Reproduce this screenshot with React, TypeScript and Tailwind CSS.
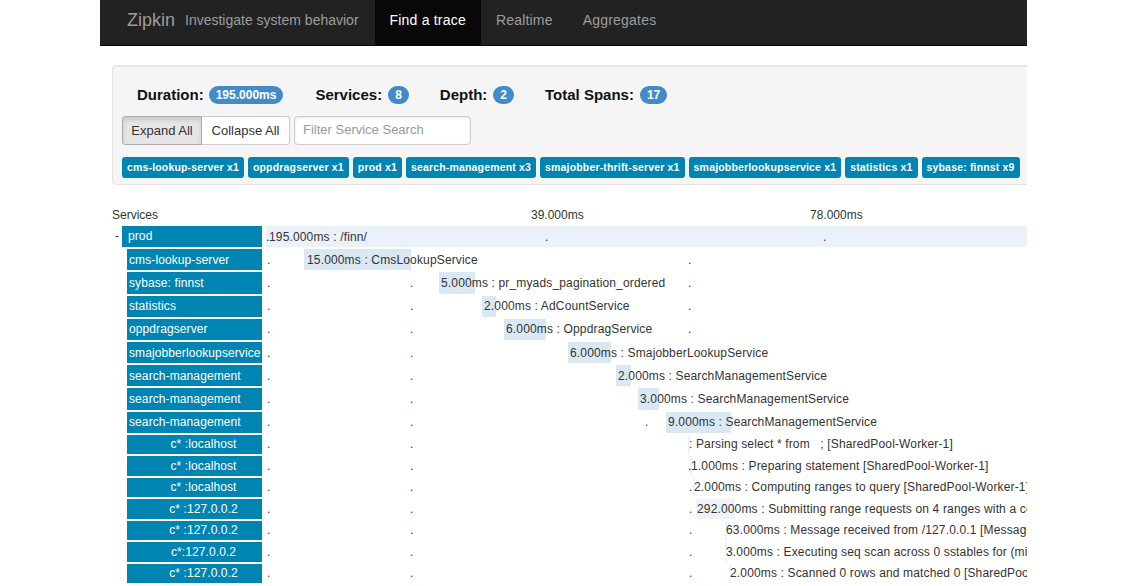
import React from "react";

const TL = 266; // page x where the timeline starts

type Span = {
    name: string;
    root?: boolean;
    host?: boolean;
    bar: [number, number];
    faint?: boolean;
    textX: number;
    text: string;
    dots: number[];
};

const tags = [
    "cms-lookup-server x1",
    "oppdragserver x1",
    "prod x1",
    "search-management x3",
    "smajobber-thrift-server x1",
    "smajobberlookupservice x1",
    "statistics x1",
    "sybase: finnst x9",
];

const spans: Span[] = [
    { name: "prod", root: true, bar: [266, 1100], textX: 269, text: "195.000ms : /finn/", dots: [267, 546, 824] },
    { name: "cms-lookup-server", bar: [304, 411], textX: 307, text: "15.000ms : CmsLookupService", dots: [268, 689] },
    { name: "sybase: finnst", bar: [439, 475], textX: 441, text: "5.000ms : pr_myads_pagination_ordered", dots: [268, 411, 689] },
    { name: "statistics", bar: [482, 496], textX: 484, text: "2.000ms : AdCountService", dots: [268, 411, 689] },
    { name: "oppdragserver", bar: [504, 546], textX: 506, text: "6.000ms : OppdragService", dots: [268, 411, 689] },
    { name: "smajobberlookupservice", bar: [568, 611], textX: 570, text: "6.000ms : SmajobberLookupService", dots: [268, 411] },
    { name: "search-management", bar: [616, 631], textX: 618, text: "2.000ms : SearchManagementService", dots: [268, 411] },
    { name: "search-management", bar: [638, 659], textX: 640, text: "3.000ms : SearchManagementService", dots: [268, 411] },
    { name: "search-management", bar: [666, 731], textX: 668, text: "9.000ms : SearchManagementService", dots: [268, 411, 646] },
    { name: "c* :localhost", host: true, bar: [688, 690], faint: true, textX: 689, text: ": Parsing select * from   ; [SharedPool-Worker-1]", dots: [268, 411] },
    { name: "c* :localhost", host: true, bar: [690, 692], faint: true, textX: 691, text: "1.000ms : Preparing statement [SharedPool-Worker-1]", dots: [268, 411, 689] },
    { name: "c* :localhost", host: true, bar: [693, 695], faint: true, textX: 694, text: "2.000ms : Computing ranges to query [SharedPool-Worker-1]", dots: [268, 411, 690] },
    { name: "c* :127.0.0.2", host: true, bar: [696, 735], faint: true, textX: 697, text: "292.000ms : Submitting range requests on 4 ranges with a concurrency of 1", dots: [268, 411, 690] },
    { name: "c* :127.0.0.2", host: true, bar: [725, 727], faint: true, textX: 726, text: "63.000ms : Message received from /127.0.0.1 [MessagingService-Incoming]", dots: [268, 411, 690] },
    { name: "c*:127.0.0.2", host: true, bar: [725, 727], faint: true, textX: 726, text: "3.000ms : Executing seq scan across 0 sstables for (min, max)", dots: [268, 411, 690] },
    { name: "c* :127.0.0.2", host: true, bar: [729, 731], faint: true, textX: 730, text: "2.000ms : Scanned 0 rows and matched 0 [SharedPool-Worker-1]", dots: [268, 411, 690] },
];

function Badge({ children }: { children: React.ReactNode }) {
    return (
        <span className="inline-flex items-center h-[18px] px-[7px] rounded-full bg-[#428bca] text-white text-[12px] font-bold leading-none">
            {children}
        </span>
    );
}

function SpanRow({ s }: { s: Span }) {
    return (
        <div className={`flex ${s.host ? "h-[21.5px]" : "h-[23.2px]"}`}>
            <div className="w-[154px] shrink-0 flex items-stretch py-[1px] text-[12px] tracking-[0.1px]">
                {s.root ? (
                    <>
                        <span className="w-[10px] pl-[3px] text-[#333] leading-[21px]">-</span>
                        <div className="w-[140px] bg-[#0085b3] text-white leading-[21px] pl-[6px]">{s.name}</div>
                    </>
                ) : (
                    <div
                        className={`ml-[15px] w-[135px] bg-[#0085b3] text-white whitespace-nowrap overflow-hidden flex items-center ${
                            s.host ? "justify-center pl-[18px]" : "pl-[2px]"
                        }`}
                    >
                        {s.name}
                    </div>
                )}
            </div>
            <div className="relative flex-1 text-[12px] tracking-[0.15px] text-[#333] whitespace-pre">
                <div
                    className={`absolute top-[1px] bottom-[1px] ${s.root ? "bg-[#eaf1f8]" : s.faint ? "bg-[#edf3f9]" : "bg-[#d9e8f3]"}`}
                    style={{ left: s.bar[0] - TL, width: s.bar[1] - s.bar[0] }}
                />
                {s.dots.map((d) => (
                    <span key={d} className="absolute inset-y-0 flex items-center" style={{ left: d - TL - 1 }}>
                        .
                    </span>
                ))}
                <span className="absolute inset-y-0 flex items-center" style={{ left: s.textX - TL }}>
                    {s.text}
                </span>
            </div>
        </div>
    );
}

export default function App() {
    return (
        <div className="min-h-screen bg-white" style={{ fontFamily: '"Liberation Sans", Arial, sans-serif' }}>
            <div className="w-[927px] mx-auto overflow-hidden">
                {/* navbar */}
                <nav className="h-[46px] bg-[#222] border-b border-[#080808] flex items-stretch text-[14px]">
                    <div className="flex items-center pb-[4px] pl-[27px] pr-[10px] text-[18px] text-[#9d9d9d]">Zipkin</div>
                    <div className="flex items-center pb-[4px] pr-[16px] text-[#9d9d9d]">Investigate system behavior</div>
                    <a className="flex items-center pb-[4px] px-[15px] tracking-[0.2px] bg-[#080808] text-white">Find a trace</a>
                    <a className="flex items-center pb-[4px] px-[15px] tracking-[0.2px] text-[#9d9d9d]">Realtime</a>
                    <a className="flex items-center pb-[4px] px-[15px] tracking-[0.2px] text-[#9d9d9d]">Aggregates</a>
                </nav>

                <div className="pl-[12px] pt-[19px]">
                    {/* summary panel */}
                    <div className="w-[940px] bg-[#f5f5f5] border border-[#e3e3e3] rounded-[4px] shadow-[inset_0_1px_1px_rgba(0,0,0,0.05)] pt-[20px] pb-[6px] px-[9px]">
                        <div className="flex items-center h-[18px] pl-[15px] text-[15px] font-bold text-[#111]">
                            <span className="mr-[5px]">Duration:</span>
                            <Badge>195.000ms</Badge>
                            <span className="ml-[32px] mr-[6px]">Services:</span>
                            <Badge>8</Badge>
                            <span className="ml-[31px] mr-[6px]">Depth:</span>
                            <Badge>2</Badge>
                            <span className="ml-[31px] mr-[6px]">Total Spans:</span>
                            <Badge>17</Badge>
                        </div>
                        <div className="flex items-center mt-[12px] gap-[4px]">
                            <div className="flex text-[13px] text-[#333]">
                                <button className="h-[29px] w-[80px] bg-[#e6e6e6] border border-[#adadad] rounded-l-[3px] shadow-[inset_0_3px_5px_rgba(0,0,0,0.125)]">
                                    Expand All
                                </button>
                                <button className="h-[29px] w-[88px] bg-white border border-l-0 border-[#ccc] rounded-r-[3px]">Collapse All</button>
                            </div>
                            <input
                                placeholder="Filter Service Search"
                                className="h-[29px] w-[177px] px-[8px] pb-[3px] text-[13px] bg-white border border-[#ccc] rounded-[4px] shadow-[inset_0_1px_3px_rgba(0,0,0,0.1)] placeholder:text-[#999] outline-none"
                            />
                        </div>
                        <div className="flex flex-nowrap gap-[4px] mt-[12px]">
                            {tags.map((t) => (
                                <span
                                    key={t}
                                    className="h-[21px] px-[5px] shrink-0 flex items-center rounded-[3px] bg-[#0085b3] text-white text-[10.5px] font-bold tracking-[0.17px] whitespace-nowrap"
                                >
                                    {t}
                                </span>
                            ))}
                        </div>
                    </div>

                    {/* timeline header */}
                    <div className="relative h-[18px] mt-[21px] text-[12px] text-[#333]">
                        <span className="absolute left-0 top-0">Services</span>
                        <span className="absolute top-0 left-[419px]">39.000ms</span>
                        <span className="absolute top-0 left-[698px]">78.000ms</span>
                    </div>

                    <div className="mt-[1px]">
                        {spans.map((s, i) => (
                            <SpanRow key={i} s={s} />
                        ))}
                    </div>
                </div>
            </div>
        </div>
    );
}
